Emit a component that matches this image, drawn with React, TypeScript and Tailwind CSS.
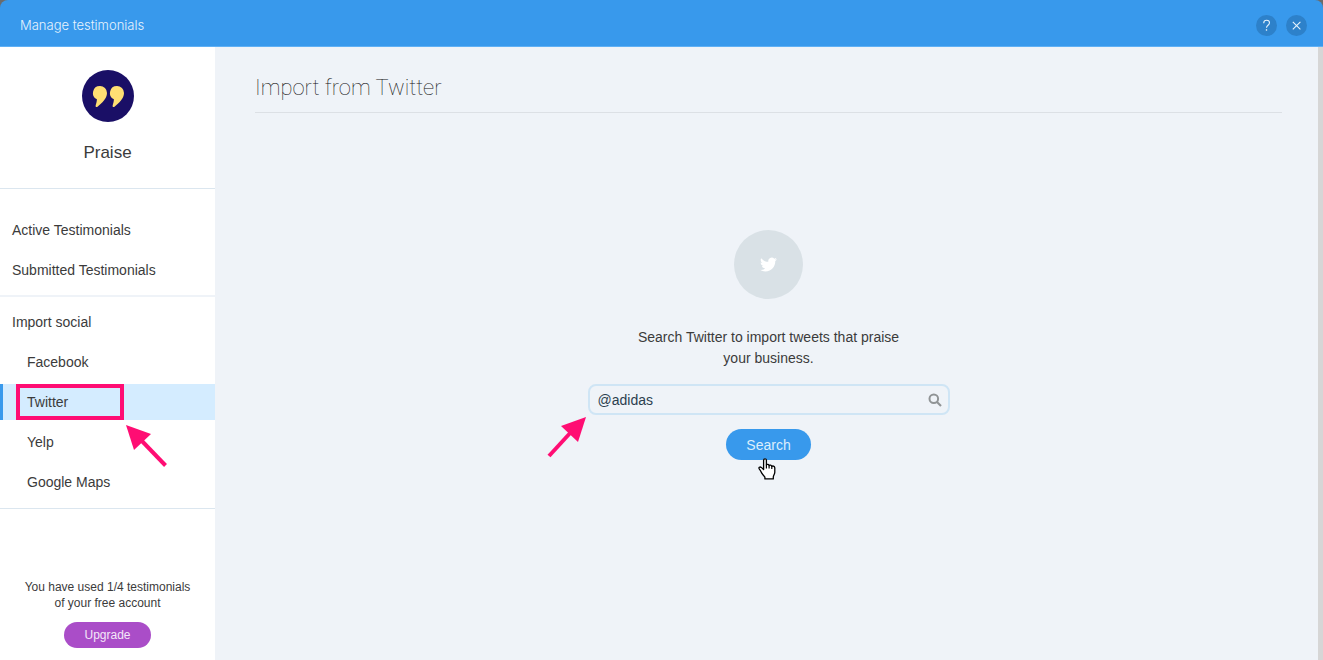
import { useState } from "react";

type NavItem = {
  id: string;
  label: string;
};

const testimonialItems: NavItem[] = [
  { id: "active", label: "Active Testimonials" },
  { id: "submitted", label: "Submitted Testimonials" },
];

const socialItems: NavItem[] = [
  { id: "facebook", label: "Facebook" },
  { id: "twitter", label: "Twitter" },
  { id: "yelp", label: "Yelp" },
  { id: "google-maps", label: "Google Maps" },
];

function PraiseLogo() {
  return (
    <svg viewBox="0 0 52 52" className="size-[52px]" aria-hidden="true">
      <circle cx="26" cy="26" r="26" fill="#1a0f66" />
      <g fill="#ffdf73">
        <path d="M18 16A7 7 0 0 1 25 23C25 28.500 20 33 15.500 36.800C14.500 37.500 13.400 37 13.600 35.800C14 33.500 14.900 32 14.900 29.300A7 7 0 0 1 18 16Z" />
        <path
          transform="translate(17)"
          d="M18 16A7 7 0 0 1 25 23C25 28.500 20 33 15.500 36.800C14.500 37.500 13.400 37 13.600 35.800C14 33.500 14.900 32 14.900 29.300A7 7 0 0 1 18 16Z"
        />
      </g>
    </svg>
  );
}

function TwitterBird() {
  return (
    <svg
      viewBox="0 0 24 24"
      className="size-[17px]"
      fill="#ffffff"
      aria-hidden="true"
    >
      <path d="M23.953 4.57a10 10 0 0 1-2.825.775 4.958 4.958 0 0 0 2.163-2.723 9.99 9.99 0 0 1-3.127 1.184 4.92 4.92 0 0 0-8.384 4.482C7.69 8.095 4.067 6.13 1.64 3.162a4.822 4.822 0 0 0-.666 2.475c0 1.71.87 3.213 2.188 4.096a4.904 4.904 0 0 1-2.228-.616v.06a4.923 4.923 0 0 0 3.946 4.827 4.996 4.996 0 0 1-2.212.085 4.936 4.936 0 0 0 4.604 3.417 9.867 9.867 0 0 1-6.102 2.105c-.39 0-.779-.023-1.17-.067a13.995 13.995 0 0 0 7.557 2.209c9.053 0 13.998-7.496 13.998-13.985 0-.21 0-.42-.015-.63A9.935 9.935 0 0 0 24 4.59z" />
    </svg>
  );
}

function HandCursor() {
  return (
    <svg
      viewBox="0 0 18 22"
      className="pointer-events-none absolute left-8 top-[29px] h-[22px] w-[18px]"
      aria-hidden="true"
    >
      <path
        d="M5.600 2.200C5.600.3 8.400.3 8.400 2.200V7c.6-1 2.600-.7 2.700.6.7-.9 2.500-.5 2.600.8.9-.8 2.900-.3 3.100 1.400v4.400c0 1.700-1.500 3.200-1.500 4.800v1.900H6.900v-1.700c-1.200-1.800-3.200-3.500-4-5.600-.6-1.400-1.900-2.400-2-3.600 0-1.100 1.500-1.300 2.400-.6l2.300 2.200Z"
        fill="#ffffff"
        stroke="#000000"
        strokeWidth="1.300"
        strokeLinejoin="round"
      />
      <path
        d="M8.400 6.800v3.700M11.100 7.600v3M13.800 8.400v2.600"
        stroke="#000000"
        strokeWidth="1.200"
        fill="none"
      />
    </svg>
  );
}

export default function App() {
  const [selected, setSelected] = useState("twitter");
  const [query, setQuery] = useState("@adidas");

  return (
    <div className="flex min-h-screen flex-col bg-[#6b6b6b] font-['Liberation_Sans',Arial,sans-serif] text-sm text-[#3b3b3b]">
      <header className="flex h-[47px] shrink-0 items-center justify-between rounded-t-lg border-b border-[#5fb0f5] bg-[#3899ec] pl-5 pr-4 pt-1">
        <h1 className="font-['Inter','Liberation_Sans',sans-serif] text-[13px] font-light text-[#e6f3fd]">
          Manage testimonials
        </h1>
        <div className="flex gap-[9px]">
          <button
            type="button"
            aria-label="Help"
            className="flex size-[21px] items-center justify-center rounded-full bg-[#2d81ca]"
          >
            <svg viewBox="0 0 21 21" className="size-[21px]" fill="none" aria-hidden="true">
              <path
                d="M7.700 8.200c0-1.800 1.100-2.900 2.900-2.900 1.700 0 2.900 1 2.900 2.500 0 2.400-3 2.500-3 5"
                stroke="#e6f3fd"
                strokeWidth="1.100"
              />
              <path d="M10.500 14.200v1.500" stroke="#e6f3fd" strokeWidth="1.300" />
            </svg>
          </button>
          <button
            type="button"
            aria-label="Close"
            className="flex size-[21px] items-center justify-center rounded-full bg-[#2d81ca]"
          >
            <svg viewBox="0 0 21 21" className="size-[21px]" aria-hidden="true">
              <path d="M6.800 6.800l7.600 7.600M14.400 6.800l-7.600 7.600" stroke="#e6f3fd" strokeWidth="1.100" />
            </svg>
          </button>
        </div>
      </header>

      <div className="flex flex-1">
        <aside className="flex w-[215px] shrink-0 flex-col bg-white">
          <div className="flex flex-col items-center border-b border-[#dbe6ef] pb-6 pt-[23px]">
            <PraiseLogo />
            <p className="mt-5 text-[17px] leading-[22px]">Praise</p>
          </div>

          <nav aria-label="Testimonials">
            <div className="flex flex-col gap-1 border-b-2 border-[#eff3f8] pb-[7px] pt-[23px]">
              {testimonialItems.map((item) => (
                <button
                  key={item.id}
                  type="button"
                  onClick={() => setSelected(item.id)}
                  className="h-9 px-3 text-left"
                >
                  {item.label}
                </button>
              ))}
            </div>

            <div className="flex flex-col gap-1 border-b border-[#dbe6ef] pb-2 pt-[7px]">
              <h2 className="flex h-9 items-center px-3">Import social</h2>
              {socialItems.map((item) => (
                <div key={item.id} className="relative">
                  <button
                    type="button"
                    onClick={() => setSelected(item.id)}
                    className={`h-9 w-full border-l-[3px] pl-6 text-left ${
                      selected === item.id
                        ? "border-[#3899ec] bg-[#d4ecff]"
                        : "border-transparent"
                    }`}
                  >
                    {item.label}
                  </button>
                  {item.id === "twitter" && (
                    <>
                      <span className="pointer-events-none absolute left-4 top-0 h-9 w-[108px] border-4 border-[#ff0d73]" />
                      <svg
                        viewBox="0 0 42 44"
                        className="pointer-events-none absolute left-[126px] top-[41px] z-10 h-[44px] w-[42px]"
                        aria-hidden="true"
                      >
                        <path d="M0 0l25 9-17 16z" fill="#ff0d73" />
                        <path d="M14 14l25.500 26.500" stroke="#ff0d73" strokeWidth="4" />
                      </svg>
                    </>
                  )}
                </div>
              ))}
            </div>
          </nav>

          <div className="mt-auto flex flex-col items-center pb-3 text-center">
            <p className="text-xs">
              You have used 1/4 testimonials
              <br />
              of your free account
            </p>
            <button
              type="button"
              className="mt-[11px] h-[26px] rounded-full bg-[#aa4dc8] px-5 text-xs text-[#f4e6f8]"
            >
              Upgrade
            </button>
          </div>
        </aside>

        <main className="flex-1 border-r-[5px] border-[#d6d6d6] bg-[#eff3f8] pl-10 pr-9">
          <h2 className="border-b border-[#dce0e5] pb-2 pt-6 font-['Roboto','Liberation_Sans',sans-serif] text-[22px] font-thin leading-[33px] text-[#111111]">
            Import from Twitter
          </h2>

          <div className="flex flex-col items-center pt-[117px]">
            <div className="flex size-[69px] items-center justify-center rounded-full bg-[#d9e1e6]">
              <TwitterBird />
            </div>

            <form
              className="mt-7 flex w-full max-w-[362px] flex-col items-center"
              onSubmit={(event) => event.preventDefault()}
            >
              <label
                htmlFor="twitter-search"
                className="text-center leading-[21px]"
              >
                Search Twitter to import tweets that praise
                <br />
                your business.
              </label>
              <div className="relative mt-[15px] w-full">
                <input
                  id="twitter-search"
                  type="text"
                  value={query}
                  onChange={(event) => setQuery(event.target.value)}
                  className="block h-[31px] w-full rounded-lg border-2 border-[#cfe5f5] bg-[#eff3f8] pl-2 pr-8 text-[#2b3f4f] outline-none"
                />
                <svg
                  viewBox="0 0 14 14"
                  className="pointer-events-none absolute right-2 top-[9px] size-[14px]"
                  fill="none"
                  stroke="#909496"
                  aria-hidden="true"
                >
                  <circle cx="5.800" cy="5.800" r="4.300" strokeWidth="2" />
                  <path d="M9 9l4 4" strokeWidth="2.200" />
                </svg>
                <svg
                  viewBox="0 0 40 42"
                  className="pointer-events-none absolute -left-[41px] top-[33px] h-[42px] w-10"
                  aria-hidden="true"
                >
                  <path d="M39 0L14 9l17 16z" fill="#ff0d73" />
                  <path d="M25 14L2 39" stroke="#ff0d73" strokeWidth="4" />
                </svg>
              </div>

              <div className="relative mt-[14px]">
                <button
                  type="submit"
                  className="h-[31px] rounded-full bg-[#3899ec] px-5 text-[#dceefc]"
                >
                  Search
                </button>
                <HandCursor />
              </div>
            </form>
          </div>
        </main>
      </div>
    </div>
  );
}
